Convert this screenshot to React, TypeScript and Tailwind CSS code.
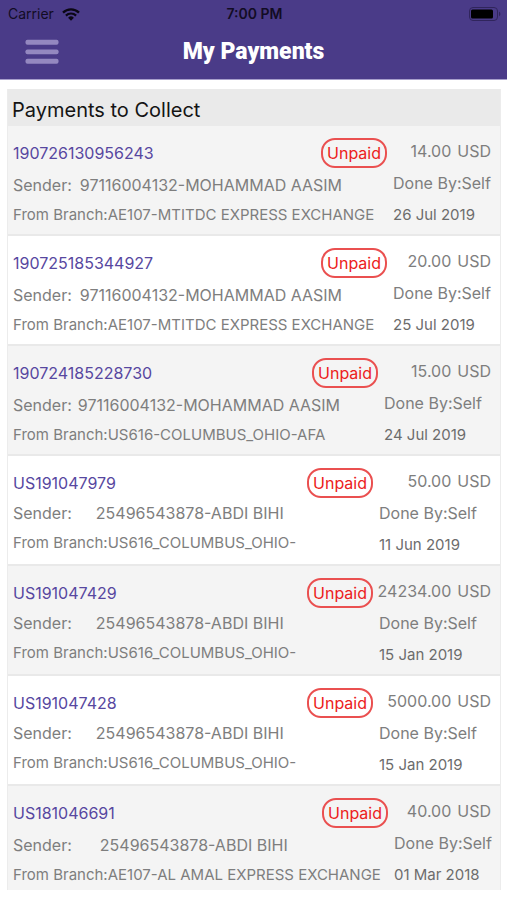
import clsx from 'clsx';

interface Payment {
  id: string;
  sender: string;
  branch: string;
  amount: string;
  date: string;
  /** Spacing after the "Sender:" label. */
  senderGap: string;
  /** Width of the amount / date column. */
  sideWidth: string;
  raised?: boolean;
}

const payments: Payment[] = [
  {
    id: '190726130956243',
    sender: '97116004132-MOHAMMAD AASIM',
    branch: 'AE107-MTITDC EXPRESS EXCHANGE',
    amount: '14.00',
    date: '26 Jul 2019',
    senderGap: 'gap-2',
    sideWidth: 'w-[98px]',
  },
  {
    id: '190725185344927',
    sender: '97116004132-MOHAMMAD AASIM',
    branch: 'AE107-MTITDC EXPRESS EXCHANGE',
    amount: '20.00',
    date: '25 Jul 2019',
    senderGap: 'gap-2',
    sideWidth: 'w-[98px]',
  },
  {
    id: '190724185228730',
    sender: '97116004132-MOHAMMAD AASIM',
    branch: 'US616-COLUMBUS_OHIO-AFA',
    amount: '15.00',
    date: '24 Jul 2019',
    senderGap: 'gap-1.5',
    sideWidth: 'w-[107px]',
  },
  {
    id: 'US191047979',
    sender: '25496543878-ABDI BIHI',
    branch: 'US616_COLUMBUS_OHIO-',
    amount: '50.00',
    date: '11 Jun 2019',
    senderGap: 'gap-6',
    sideWidth: 'w-[112px]',
    raised: true,
  },
  {
    id: 'US191047429',
    sender: '25496543878-ABDI BIHI',
    branch: 'US616_COLUMBUS_OHIO-',
    amount: '24234.00',
    date: '15 Jan 2019',
    senderGap: 'gap-6',
    sideWidth: 'w-[112px]',
    raised: true,
  },
  {
    id: 'US191047428',
    sender: '25496543878-ABDI BIHI',
    branch: 'US616_COLUMBUS_OHIO-',
    amount: '5000.00',
    date: '15 Jan 2019',
    senderGap: 'gap-6',
    sideWidth: 'w-[112px]',
    raised: true,
  },
  {
    id: 'US181046691',
    sender: '25496543878-ABDI BIHI',
    branch: 'AE107-AL AMAL EXPRESS EXCHANGE',
    amount: '40.00',
    date: '01 Mar 2018',
    senderGap: 'gap-7',
    sideWidth: 'w-[97px]',
  },
];

function WifiIcon() {
  return (
    <svg viewBox="0 0 18 13" aria-hidden="true" className="h-[13px] w-[18px]">
      <path d="M1 4.6a11.4 11.4 0 0 1 16 0" fill="none" stroke="#0b0714" strokeWidth="2.3" />
      <path d="M3.9 7.6a7.3 7.3 0 0 1 10.2 0" fill="none" stroke="#0b0714" strokeWidth="2.2" />
      <path d="M6.1 9.7a4.2 4.2 0 0 1 5.8 0L9 12.7z" fill="#0b0714" />
    </svg>
  );
}

function BatteryIcon() {
  return (
    <svg viewBox="0 0 32 14" aria-hidden="true" className="h-[14px] w-8">
      <rect x="0.5" y="0.5" width="28" height="13" rx="3.5" fill="none" stroke="#30255c" />
      <rect x="2" y="2.5" width="22" height="9" rx="1.5" fill="#000" />
      <path d="M30 4.8c1.8.6 1.8 3.8 0 4.4z" fill="#30255c" />
    </svg>
  );
}

function MenuIcon() {
  return (
    <svg viewBox="0 0 36 26" aria-hidden="true" className="h-[26px] w-9">
      <g fill="#9488c0">
        <rect x="0.5" y="0.5" width="34" height="5" rx="2" />
        <rect x="0.5" y="10.3" width="34" height="5" rx="2" />
        <rect x="0.5" y="20" width="34" height="5" rx="2" />
      </g>
    </svg>
  );
}

function Header() {
  return (
    <header className="border-b border-[#a79fcb] bg-[#4a3b88]">
      <div className="grid h-7 grid-cols-3 items-center pr-1.5 pl-2 text-sm text-[#120c24]">
        <div className="flex items-center gap-2">
          <span>Carrier</span>
          <WifiIcon />
        </div>
        <span className="text-center font-semibold">7:00 PM</span>
        <div className="flex justify-end">
          <BatteryIcon />
        </div>
      </div>
      <div className="grid h-[51px] grid-cols-[60px_1fr_60px] items-center">
        <button type="button" aria-label="Menu" className="flex h-full items-center pb-1 pl-[25px]">
          <MenuIcon />
        </button>
        <h1 className="pb-1 text-center font-[Roboto,sans-serif] text-[23px] leading-8 font-black text-white">
          My Payments
        </h1>
      </div>
    </header>
  );
}

function PaymentRow({ payment }: { payment: Payment }) {
  return (
    <li className="flex h-[110px] items-start gap-[6px] border-b-2 border-[#e9e9e9] pr-[9px] pl-[5px] last:h-[104px] last:border-b-0 odd:bg-[#f4f4f4] even:bg-white">
      <div className="min-w-0 flex-1 pt-3 whitespace-nowrap text-[#7e7e7e]">
        <div className="flex h-[30px] items-center justify-between">
          <a href={`#${payment.id}`} className="text-base leading-6 text-[#5747a0]">
            {payment.id}
          </a>
          <span className="rounded-[14px] border-2 border-[#ea5050] px-1 text-base leading-[26px] text-[#ec2020]">
            Unpaid
          </span>
        </div>
        <div className={clsx(payment.raised ? 'pt-1' : 'pt-1.5')}>
          <p className={clsx('flex text-base leading-[22px]', payment.senderGap)}>
            <span>Sender:</span>
            <span>{payment.sender}</span>
          </p>
          <p className="pt-2 text-[15px] leading-[22px]">From Branch:{payment.branch}</p>
        </div>
      </div>

      <div className={clsx('shrink-0 pt-[14px] whitespace-nowrap text-[#7e7e7e]', payment.sideWidth)}>
        <p className="flex justify-end gap-1.5 text-base leading-[22px]">
          <span>{payment.amount}</span>
          <span>USD</span>
        </p>
        <p className="pt-2.5 text-base leading-[22px]">Done By:Self</p>
        <p className="pt-2.5 text-[15px] leading-[22px] text-[#6c6c6c]">{payment.date}</p>
      </div>
    </li>
  );
}

export default function App() {
  return (
    <div className="min-h-screen bg-white font-[Inter,sans-serif]">
      <Header />
      <main className="pt-[9px] pr-1.5 pl-[7px]">
        <section className="border-x border-[#ececec]">
          <h2 className="h-[37px] bg-[#eaeaea] pt-1.5 pl-1 text-xl leading-[30px] text-[#141414]">
            Payments to Collect
          </h2>
          <ul>
            {payments.map((payment) => (
              <PaymentRow key={payment.id} payment={payment} />
            ))}
          </ul>
        </section>
      </main>
    </div>
  );
}
